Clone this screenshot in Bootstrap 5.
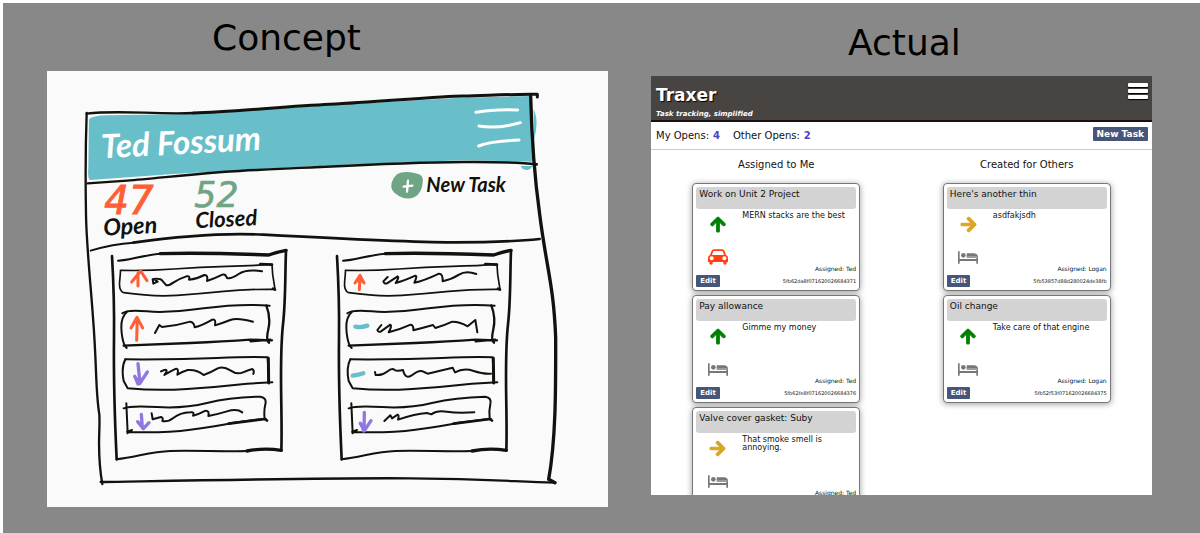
<!DOCTYPE html>
<html lang="en">
<head>
<meta charset="utf-8">
<meta name="viewport" content="width=device-width, initial-scale=1">
<title>Traxer: concept and actual</title>
<link href="https://cdn.jsdelivr.net/npm/bootstrap@5.3.0/dist/css/bootstrap.min.css" rel="stylesheet">
<style>
  body { font-family: "DejaVu Sans", sans-serif; background: #fff; color: #111; padding: 3px 0 0 3px; }
  .stage { background: #888; min-height: calc(100vh - 3px); display: grid; grid-template-columns: 561fr 501fr; column-gap: 43px; padding: 13px 48px 20px 44px; align-items: start; }
  .stage h2 { font-size: 36px; line-height: 43px; margin: 0 0 12px; color: #000; font-weight: 400; }
  .concept h2 { padding-left: 165px; }
  .actual { padding-top: 5px; }
  .actual h2 { padding-left: 197px; }
  .sketch { display: block; width: 100%; background: #fafafa; }
  .ink { fill: none; stroke: #11110e; stroke-linecap: round; stroke-linejoin: round; }
  .pen { font-family: Lato, sans-serif; font-style: italic; }
  .pen-num { font-family: "DejaVu Sans", sans-serif; }

  .app { background: #fff; aspect-ratio: 501 / 419; overflow: hidden; }
  .app-top { background: #484442; border-bottom: 2px solid #1c0f12; color: #fff; height: 46px; padding: 6px 4px 0 5px; }
  .app-top h1 { font-size: 17px; line-height: 26px; font-weight: 700; margin: 0; text-shadow: 1px 1px 1px #000; }
  .app-top p { font-size: 7px; line-height: 12px; font-weight: 700; font-style: italic; margin: 0; }
  .burger { border: 0; background: none; padding: 1px 0 0; gap: 2px; width: 20px; }
  .burger span { height: 4px; background: #fff; border-radius: 1px; box-shadow: 0 1px 1px #000; }
  .stats { font-size: 10px; line-height: 14px; height: 28px; padding: 0 4px 3px 5px; border-bottom: 1px solid #ccc; }
  .stats dl { padding-top: 3px; }
  .stats dt { font-weight: 400; }
  .stats dd { font-weight: 700; color: #4a3fcf; margin: 0 13px 0 4px; }
  .act { background: #465679; color: #fff; border: 0; border-radius: 1px; font-weight: 700; line-height: 12px; }
  .act-new { font-size: 9px; padding: 1px 4px; }
  .act-edit { font-size: 7px; padding: 0 4px; }
  .lane { padding-top: 8px; }
  .lane h3 { font-size: 10px; line-height: 14px; margin: 0 0 11px; font-weight: 400; }
  .lane ul { width: 67%; gap: 4px; }
  .task { height: 108px; border: 1px solid #777; border-radius: 4px; padding: 3px; background: #fff; box-shadow: 0 1px 6px rgba(0,0,0,.4); }
  .task h4 { background: #d3d3d3; border-radius: 3px; height: 22px; margin: 0; padding: 1px 3px; font-size: 9px; line-height: 12px; font-weight: 400; }
  .task-main { height: 66px; flex: none; }
  .task-icons { width: 43px; flex: none; padding: 7px 0 10px; }
  .task-desc { font-size: 8px; line-height: 8px; padding: 3px 0 0 3px; }
  .task-who { font-size: 6px; line-height: 8px; padding-bottom: 2px; }
  .task-id { font-size: 5px; line-height: 8px; }
</style>
</head>
<body>
<svg width="0" height="0" class="position-absolute" aria-hidden="true">
  <symbol id="arrow" viewBox="-16 0 480 512"><path stroke="currentColor" stroke-width="32" stroke-linejoin="round" d="M34.9 289.5l-22.2-22.2c-9.4-9.4-9.4-24.6 0-33.9L207 39c9.4-9.4 24.6-9.4 33.9 0l194.3 194.3c9.4 9.4 9.4 24.6 0 33.9L413 289.4c-9.5 9.5-25 9.3-34.3-.4L264 168.6V456c0 13.3-10.7 24-24 24h-32c-13.3 0-24-10.7-24-24V168.6L69.2 289.1c-9.3 9.8-24.8 10-34.3.4z"/></symbol>
  <symbol id="bed" viewBox="0 0 60 45"><path d="M0 4h5v23h50v-3h5v17h-5v-8H5v8H0z"/><circle cx="16" cy="16" r="7"/><path d="M26 10h22q11 1 12 10v3H26z"/><path d="M28 20h29" stroke="#bbb" stroke-width="2"/></symbol>
  <symbol id="car" viewBox="0 0 60 48"><path fill-rule="evenodd" d="M18 1h24q6 0 8 6l4 11q6 2 6 9v12h-4v3q0 5-5 5t-5-5v-3H14v3q0 5-5 5t-5-5v-3H0V27q0-7 6-9l4-11q2-6 8-6zM18 6q-2 0-3 3l-3 9h36l-3-9q-1-3-3-3zM11 22a6 6 0 1 0 .1 0zM49 22a6 6 0 1 0 .1 0z"/></symbol>
</svg>

<main class="stage">
  <section class="concept">
    <h2>Concept</h2>
    <svg class="sketch" viewBox="0 0 1683 1308" role="img" aria-label="Hand drawn wireframe of the task board">
      <defs>
        <g id="lane-sketch">
          <path stroke-width="8" d="M195 555C200 640 202 720 201 800S204 1060 209 1165"/>
          <path stroke-width="6" d="M213 569C250 569 280 553 340 548"/>
          <path stroke-width="10" d="M340 548C430 545 560 548 665 552Q690 543 717 538"/>
          <path stroke-width="8" d="M717 538C714 620 716 690 708 760C695 880 707 1020 703 1138"/>
          <path stroke-width="6" d="M209 1165C270 1158 310 1142 370 1140S540 1142 600 1140"/>
          <path stroke-width="10" d="M600 1140Q650 1130 703 1138"/>
          <path stroke-width="5" d="M220 598Q300 600 380 594T540 586 675 580L677 610 684 655Q600 654 530 661T390 673 230 665Q215 660 218 630T220 600"/>
          <path stroke-width="8" d="M640 579L675 581M678 653L684 656"/>
          <path stroke-width="6" d="M226 727Q240 715 300 721T470 712 668 704"/>
          <path stroke-width="6" d="M240 722Q222 738 223 770T233 824L239 831"/>
          <path stroke-width="7" d="M230 824Q330 820 430 816T610 806L675 808M658 703Q672 740 664 775T666 815M611 811L670 806"/>
          <path stroke-width="6" d="M235 865Q400 866 510 861T662 859Q665 900 665 935"/>
          <path stroke-width="6" d="M235 865Q222 890 230 930L242 952Q330 960 420 954T600 938L676 934"/>
          <path stroke-width="9" d="M664 862L665 936"/>
          <path stroke-width="6" d="M230 1012Q250 1003 330 1008T480 996 640 977Q660 980 655 1000T653 1045M238 997L242 1087M255 1077L240 1083Q350 1087 430 1076T560 1055L655 1043"/>
          <path stroke-width="8" d="M545 1058L655 1044 660 1049"/>
        </g>
      </defs>
      <path fill="#69bfc9" d="M126 145Q135 134 180 133L430 129 849 103 1240 80 1449 75 1459 272 1249 268 819 284 379 309 129 327Q121 322 124 290zM1460 115Q1477 150 1461 205zM1421 285h36q-8 14-20 12t-16-12z"/>
      <g class="ink">
        <path stroke-width="7" d="M119 128C215 116 320 131 439 126"/>
        <path stroke-width="9" d="M439 126C560 122 710 107 849 100S1180 76 1249 75 1380 69 1471 70V78"/>
        <path stroke-width="7" d="M119 126C116 210 115 320 117 430C118 520 132 650 138 740C150 890 145 960 157 1030C160 1090 148 1140 166 1239"/>
        <path stroke-width="7" d="M161 1233C400 1229 850 1220 1089 1222S1400 1232 1524 1235"/>
        <path stroke-width="10" d="M1451 75C1454 200 1460 300 1478 430C1498 590 1520 640 1526 800C1526 930 1528 1100 1505 1225L1524 1235"/>
        <path stroke-width="7" d="M122 337L240 329C350 320 500 302 629 297S760 290 819 288"/>
        <path stroke-width="8" d="M819 288Q1100 274 1249 273T1469 280"/>
        <path stroke-width="6" d="M131 539C180 524 220 517 259 515"/>
        <path stroke-width="8" d="M259 515C400 495 520 484 650 491S1100 514 1219 514 1400 512 1478 504"/>
        <use href="#lane-sketch"/>
        <use href="#lane-sketch" x="675"/>
        <g stroke-width="6">
          <path d="M317 625L319 638 332 632 320 624Q340 622 345 628L358 643Q366 644 380 634T418 616Q430 613 426 626 450 624 472 612 484 611 480 630 500 624 526 611 536 608 540 621 552 625 575 609T645 601"/>
          <path d="M324 786L337 762 345 768Q390 764 430 752 442 755 443 769 465 764 496 746 508 743 504 763 530 755 550 747T618 752"/>
          <path d="M342 901Q362 890 358 903L352 912Q375 898 388 893 396 894 391 911 405 902 422 897 450 895 470 912 490 905 512 892 530 885 550 898 570 912 588 904T616 894Q623 898 619 909"/>
          <path d="M314 1027L317 1045Q335 1040 342 1038 350 1040 346 1050 362 1054 380 1040T430 1024Q444 1022 438 1034 455 1030 476 1019 488 1019 484 1035 510 1030 540 1021T586 1024"/>
          <path d="M1022 618L1009 631Q1012 640 1020 637L1052 616Q1058 618 1046 636 1070 630 1105 614 1112 614 1102 635 1130 630 1176 608 1188 608 1187 631 1215 625 1236 611T1288 609"/>
          <path d="M1003 762L991 777Q994 785 1002 781L1030 761Q1036 763 1025 784 1060 775 1091 761 1100 762 1099 778 1130 770 1158 762L1165 771Q1190 764 1216 752 1240 752 1262 766L1285 747 1291 784"/>
          <path d="M984 903L986 912Q1005 914 1020 902T1042 896 1068 897Q1075 928 1097 911T1131 903L1142 908 1217 890 1224 904Q1250 890 1280 900T1332 908"/>
          <path d="M1012 1050L1030 1033 1035 1042 1052 1031Q1057 1033 1053 1046 1105 1028 1140 1026L1153 1030Q1170 1017 1200 1022T1282 1024"/>
        </g>
        <g stroke="#ff5f36" stroke-width="9">
          <path d="M273 645V606M254 633L281 600 300 629"/>
          <path d="M269 808L271 740M252 771L270 739 287 771"/>
          <path d="M937 656L939 614M924 636L939 613 951 636M930 630h16"/>
        </g>
        <g stroke="#9276e2" stroke-width="10">
          <path d="M273 878L279 937M263 916L278 938 301 903M265 920L273 939"/>
          <path d="M283 1030L286 1070M272 1052L289 1073 306 1055"/>
          <path d="M952 1024L951 1078M940 1057L952 1079 972 1049M945 1064L950 1080"/>
        </g>
        <path stroke="#69bfc9" stroke-width="13" d="M925 767Q940 771 961 764M917 914Q935 912 949 907"/>
        <path stroke="#fff" stroke-width="9" d="M1287 124Q1340 114 1412 117M1296 165Q1350 175 1420 155M1295 225Q1330 211 1416 207"/>
      </g>
      <path fill="#6fa585" d="M1050 310Q1070 297 1105 307Q1132 310 1127 335Q1125 365 1103 378Q1080 389 1056 375Q1027 360 1034 335Q1040 318 1050 310z"/>
      <g class="ink"><path stroke="#fff" stroke-width="7" d="M1083 329L1080 362M1070 347L1096 344"/></g>
      <g class="pen">
        <text x="164" y="262" font-size="99" font-weight="700" fill="#fff" transform="rotate(-3 164 262)">Ted Fossum</text>
        <text x="170" y="494" font-size="70" fill="#11110e" font-weight="700" transform="rotate(-3 170 494)">Open</text>
        <text x="446" y="472" font-size="66" fill="#11110e" font-weight="700" transform="rotate(-3 446 472)">Closed</text>
        <text x="1138" y="364" font-size="60" fill="#11110e" font-weight="700">New Task</text>
        <text class="pen-num" x="172" y="428" font-size="116" fill="#ff5f36" stroke="#ff5f36" stroke-width="3">47</text>
        <text class="pen-num" x="442" y="408" font-size="104" fill="#6fa585" stroke="#6fa585" stroke-width="2">52</text>
      </g>
    </svg>
  </section>

  <section class="actual">
    <h2>Actual</h2>
    <div class="app">
      <header class="app-top d-flex justify-content-between align-items-start">
        <div><h1>Traxer</h1><p>Task tracking, simplified</p></div>
        <button class="burger d-flex flex-column" type="button" aria-label="Menu"><span class="w-100"></span><span class="w-100"></span><span class="w-100"></span></button>
      </header>
      <div class="stats d-flex align-items-center justify-content-between">
        <dl class="d-flex m-0"><dt>My Opens:</dt><dd>4</dd><dt>Other Opens:</dt><dd>2</dd></dl>
        <button class="act act-new" type="button">New Task</button>
      </div>
      <div class="row g-0">
        <section class="col-6 lane">
          <h3 class="text-center">Assigned to Me</h3>
          <ul class="list-unstyled d-flex flex-column mx-auto mb-0">
            <li class="task d-flex flex-column">
              <h4>Work on Unit 2 Project</h4>
              <div class="task-main d-flex">
                <div class="task-icons d-flex flex-column align-items-center justify-content-between"><svg width="16" height="17" fill="green" color="green"><use href="#arrow"/></svg><svg width="20" height="16" fill="#ff4013"><use href="#car"/></svg></div>
                <div class="d-flex flex-column flex-grow-1 justify-content-between"><p class="task-desc m-0">MERN stacks are the best</p><span class="task-who text-end">Assigned: Ted</span></div>
              </div>
              <div class="d-flex justify-content-between align-items-center"><button class="act act-edit" type="button">Edit</button><span class="task-id">5fb62da8f071620026684371</span></div>
            </li>
            <li class="task d-flex flex-column">
              <h4>Pay allowance</h4>
              <div class="task-main d-flex">
                <div class="task-icons d-flex flex-column align-items-center justify-content-between"><svg width="16" height="17" fill="green" color="green"><use href="#arrow"/></svg><svg width="20" height="15" fill="#777"><use href="#bed"/></svg></div>
                <div class="d-flex flex-column flex-grow-1 justify-content-between"><p class="task-desc m-0">Gimme my money</p><span class="task-who text-end">Assigned: Ted</span></div>
              </div>
              <div class="d-flex justify-content-between align-items-center"><button class="act act-edit" type="button">Edit</button><span class="task-id">5fb62fe8f071620026684376</span></div>
            </li>
            <li class="task d-flex flex-column">
              <h4>Valve cover gasket: Suby</h4>
              <div class="task-main d-flex">
                <div class="task-icons d-flex flex-column align-items-center justify-content-between"><svg width="17" height="17" fill="goldenrod" color="goldenrod" viewBox="0 0 17 17"><use href="#arrow" width="17" height="17" transform="rotate(90 8.5 8.5)"/></svg><svg width="20" height="15" fill="#777"><use href="#bed"/></svg></div>
                <div class="d-flex flex-column flex-grow-1 justify-content-between"><p class="task-desc m-0">That smoke smell is annoying.</p><span class="task-who text-end">Assigned: Ted</span></div>
              </div>
            </li>
          </ul>
        </section>
        <section class="col-6 lane">
          <h3 class="text-center">Created for Others</h3>
          <ul class="list-unstyled d-flex flex-column mx-auto mb-0">
            <li class="task d-flex flex-column">
              <h4>Here's another thin</h4>
              <div class="task-main d-flex">
                <div class="task-icons d-flex flex-column align-items-center justify-content-between"><svg width="17" height="17" fill="goldenrod" color="goldenrod" viewBox="0 0 17 17"><use href="#arrow" width="17" height="17" transform="rotate(90 8.5 8.5)"/></svg><svg width="20" height="15" fill="#777"><use href="#bed"/></svg></div>
                <div class="d-flex flex-column flex-grow-1 justify-content-between"><p class="task-desc m-0">asdfakjsdh</p><span class="task-who text-end">Assigned: Logan</span></div>
              </div>
              <div class="d-flex justify-content-between align-items-center"><button class="act act-edit" type="button">Edit</button><span class="task-id">5fb53857d88d280024de38fb</span></div>
            </li>
            <li class="task d-flex flex-column">
              <h4>Oil change</h4>
              <div class="task-main d-flex">
                <div class="task-icons d-flex flex-column align-items-center justify-content-between"><svg width="16" height="17" fill="green" color="green"><use href="#arrow"/></svg><svg width="20" height="15" fill="#777"><use href="#bed"/></svg></div>
                <div class="d-flex flex-column flex-grow-1 justify-content-between"><p class="task-desc m-0">Take care of that engine</p><span class="task-who text-end">Assigned: Logan</span></div>
              </div>
              <div class="d-flex justify-content-between align-items-center"><button class="act act-edit" type="button">Edit</button><span class="task-id">5fb52f53f071620026684375</span></div>
            </li>
          </ul>
        </section>
      </div>
    </div>
  </section>
</main>
<script src="https://cdn.jsdelivr.net/npm/bootstrap@5.3.0/dist/js/bootstrap.bundle.min.js"></script>
</body>
</html>
